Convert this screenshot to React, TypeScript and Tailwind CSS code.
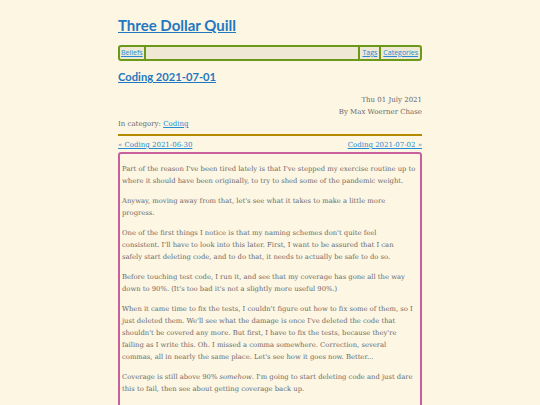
export default function App() {
  const heading = { fontFamily: 'Lato, "Open Sans", sans-serif' };
  const body = { fontFamily: '"DejaVu Serif", serif' };

  return (
    <div className="min-h-[405px] bg-[#fdf6e3] text-[#696969]" style={body}>
      <div className="mx-auto w-[304px] pt-[15px]">
        <h1 className="text-[15px] font-bold leading-[20px]" style={heading}>
          <a href="#" className="text-[#1f78c1] underline">Three Dollar Quill</a>
        </h1>

        <nav
          className="mt-[10px] flex h-[16px] items-center rounded-[3px] border-2 border-[#6b9a1a] bg-[#eee8d5] text-[7px]"
          style={{ fontFamily: '"Open Sans", sans-serif' }}
        >
          <a href="#" className="px-[1px] text-[#268bd2] underline">Beliefs</a>
          <span className="h-full w-[2px] bg-[#6b9a1a]" />
          <span className="flex-1" />
          <span className="h-full w-[2px] bg-[#6b9a1a]" />
          <a href="#" className="px-[2px] text-[#268bd2] underline">Tags</a>
          <span className="h-full w-[2px] bg-[#6b9a1a]" />
          <a href="#" className="px-[2px] text-[#268bd2] underline">Categories</a>
        </nav>

        <h2 className="mt-[8px] text-[11.2px] font-bold leading-[16px]" style={heading}>
          <a href="#" className="text-[#1f78c1] underline">Coding 2021-07-01</a>
        </h2>

        <div className="mt-[9px] text-right text-[7px] leading-[12px]">
          <div>Thu 01 July 2021</div>
          <div>By Max Woerner Chase</div>
        </div>
        <div className="text-[7px] leading-[12px]">
          In category: <a href="#" className="text-[#268bd2] underline">Coding</a>
        </div>

        <div className="mt-[4px] h-[2px] bg-[#b58900]" />

        <div className="mt-[3px] flex justify-between text-[7px] leading-[12px]">
          <a href="#" className="text-[#268bd2] underline">« Coding 2021-06-30</a>
          <a href="#" className="text-[#268bd2] underline">Coding 2021-07-02 »</a>
        </div>

        <div className="mt-[1px] rounded-[3px] border-2 border-[#c8609e] px-[2px] pb-[20px] pt-[1px] text-[6.8px] leading-[12px]">
          <p className="my-[8px]">
            Part of the reason I've been tired lately is that I've stepped my exercise routine up to where it should have been originally, to try to shed some of the pandemic weight.
          </p>
          <p className="my-[8px]">
            Anyway, moving away from that, let's see what it takes to make a little more progress.
          </p>
          <p className="my-[8px]">
            One of the first things I notice is that my naming schemes don't quite feel
            <br />
            consistent. I'll have to look into this later. First, I want to be assured that I can
            <br />
            safely start deleting code, and to do that, it needs to actually be safe to do so.
          </p>
          <p className="my-[8px]">
            Before touching test code, I run it, and see that my coverage has gone all the way down to 90%. (It's too bad it's not a slightly more useful 90%.)
          </p>
          <p className="my-[8px]">
            When it came time to fix the tests, I couldn't figure out how to fix some of them, so I just deleted them. We'll see what the damage is once I've deleted the code that shouldn't be covered any more. But first, I have to fix the tests, because they're failing as I write this. Oh. I missed a comma somewhere. Correction, several commas, all in nearly the same place. Let's see how it goes now. Better...
          </p>
          <p className="mt-[8px]">
            Coverage is still above 90% <em>somehow</em>. I'm going to start deleting code and just dare this to fail, then see about getting coverage back up.
          </p>
        </div>
      </div>
    </div>
  );
}
